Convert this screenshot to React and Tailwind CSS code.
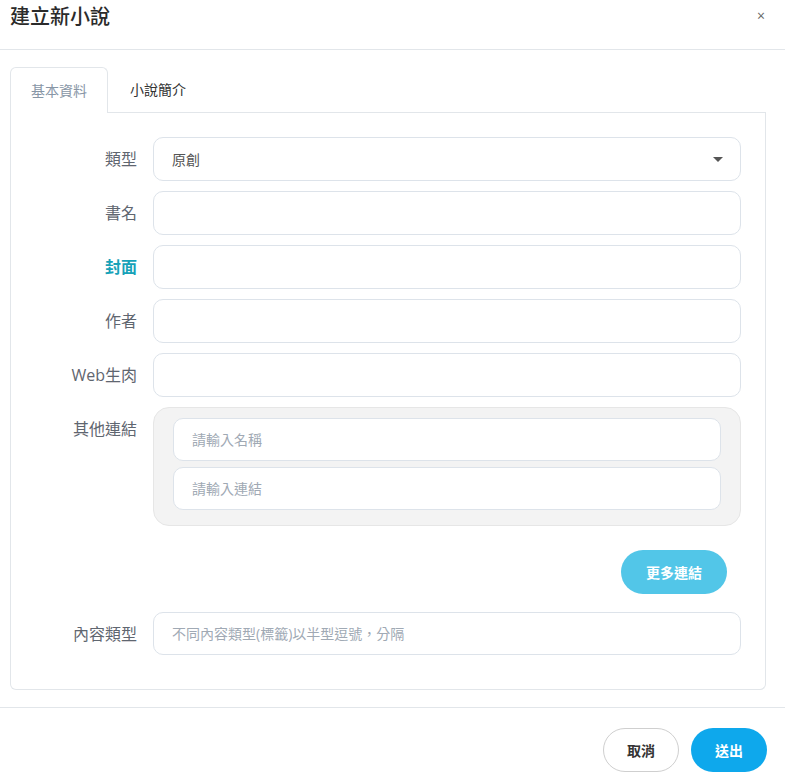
import React from "react";

const font = { fontFamily: '"Open Sans", "Noto Sans CJK TC", sans-serif' };

function Row({ label, labelClass = "text-[#5f6670]", children, top = false }) {
  return (
    <div className={`flex ${top ? "items-start" : "items-center"}`}>
      <div className={`w-[126px] shrink-0 text-right text-[16px] ${labelClass} ${top ? "pt-[10px]" : ""}`}>{label}</div>
      <div className="ml-[16px] flex-1">{children}</div>
    </div>
  );
}

function Input({ placeholder, value, h = "h-[44px]" }) {
  return (
    <div className={`${h} w-full rounded-[10px] border border-[#dde3ea] bg-white px-[18px] flex items-center text-[14px]`}>
      {value ? <span className="text-[#555]">{value}</span> : <span className="text-[#a0a9b4]">{placeholder}</span>}
    </div>
  );
}

export default function App() {
  return (
    <div className="w-[785px] h-[781px] bg-white relative" style={font}>
      <div className="h-[50px] border-b border-[#e2e6ea] flex items-start justify-between pl-[10px] pr-[20px] pt-[3px]">
        <div className="text-[20px] leading-[28px] text-[#2b2b2b] font-medium">建立新小說</div>
        <div className="text-[14px] leading-[26px] text-[#666]">×</div>
      </div>
      <div className="pl-[10px] pr-[19px] pt-[17px]">
        <div className="flex">
          <div className="w-[98px] h-[46px] border border-b-0 border-[#e2e6ea] rounded-t-[6px] flex items-center justify-center text-[14px] text-[#8896a6]">基本資料</div>
          <div className="flex-1 border-b border-[#e2e6ea] flex items-center">
            <div className="pl-[22px] text-[14px] text-[#333] -mt-[1px]">小說簡介</div>
          </div>
        </div>
        <div className="border border-t-0 border-[#e2e6ea] rounded-b-[6px] pt-[24px] pb-[34px] pr-[24px]">
          <div className="flex flex-col gap-[10px]">
            <Row label="類型">
              <div className="h-[44px] w-full rounded-[10px] border border-[#dde3ea] bg-white pl-[18px] pr-[17px] flex items-center justify-between text-[14px]">
                <span className="text-[#555]">原創</span>
                <svg width="10" height="5" viewBox="0 0 10 5"><path d="M0 0 L10 0 L5 5 Z" fill="#555" /></svg>
              </div>
            </Row>
            <Row label="書名"><Input /></Row>
            <Row label="封面" labelClass="text-[#17a2b8] font-bold"><Input /></Row>
            <Row label="作者"><Input /></Row>
            <Row label="Web生肉"><Input /></Row>
            <Row label="其他連結" top>
              <div className="rounded-[16px] border border-[#e6e6e6] bg-[#f3f3f3] pt-[10px] pb-[15px] px-[19px] flex flex-col gap-[6px]">
                <Input placeholder="請輸入名稱" h="h-[43px]" />
                <Input placeholder="請輸入連結" h="h-[43px]" />
              </div>
            </Row>
          </div>
          <div className="flex justify-end pr-[14px] mt-[24px]">
            <div className="w-[106px] h-[44px] rounded-full bg-[#52c6e8] text-white font-bold text-[14px] flex items-center justify-center">更多連結</div>
          </div>
          <div className="mt-[18px]">
            <Row label="內容類型"><Input placeholder="不同內容類型(標籤)以半型逗號，分隔" h="h-[43px]" /></Row>
          </div>
        </div>
      </div>
      <div className="mt-[17px] border-t border-[#e2e6ea] flex justify-end gap-[12px] pt-[20px] pr-[18px]">
        <div className="w-[76px] h-[44px] rounded-full border border-[#cfcfcf] bg-white text-[#333] text-[14px] font-bold flex items-center justify-center">取消</div>
        <div className="w-[76px] h-[44px] rounded-full bg-[#0ea8ec] text-white text-[14px] font-bold flex items-center justify-center">送出</div>
      </div>
    </div>
  );
}
